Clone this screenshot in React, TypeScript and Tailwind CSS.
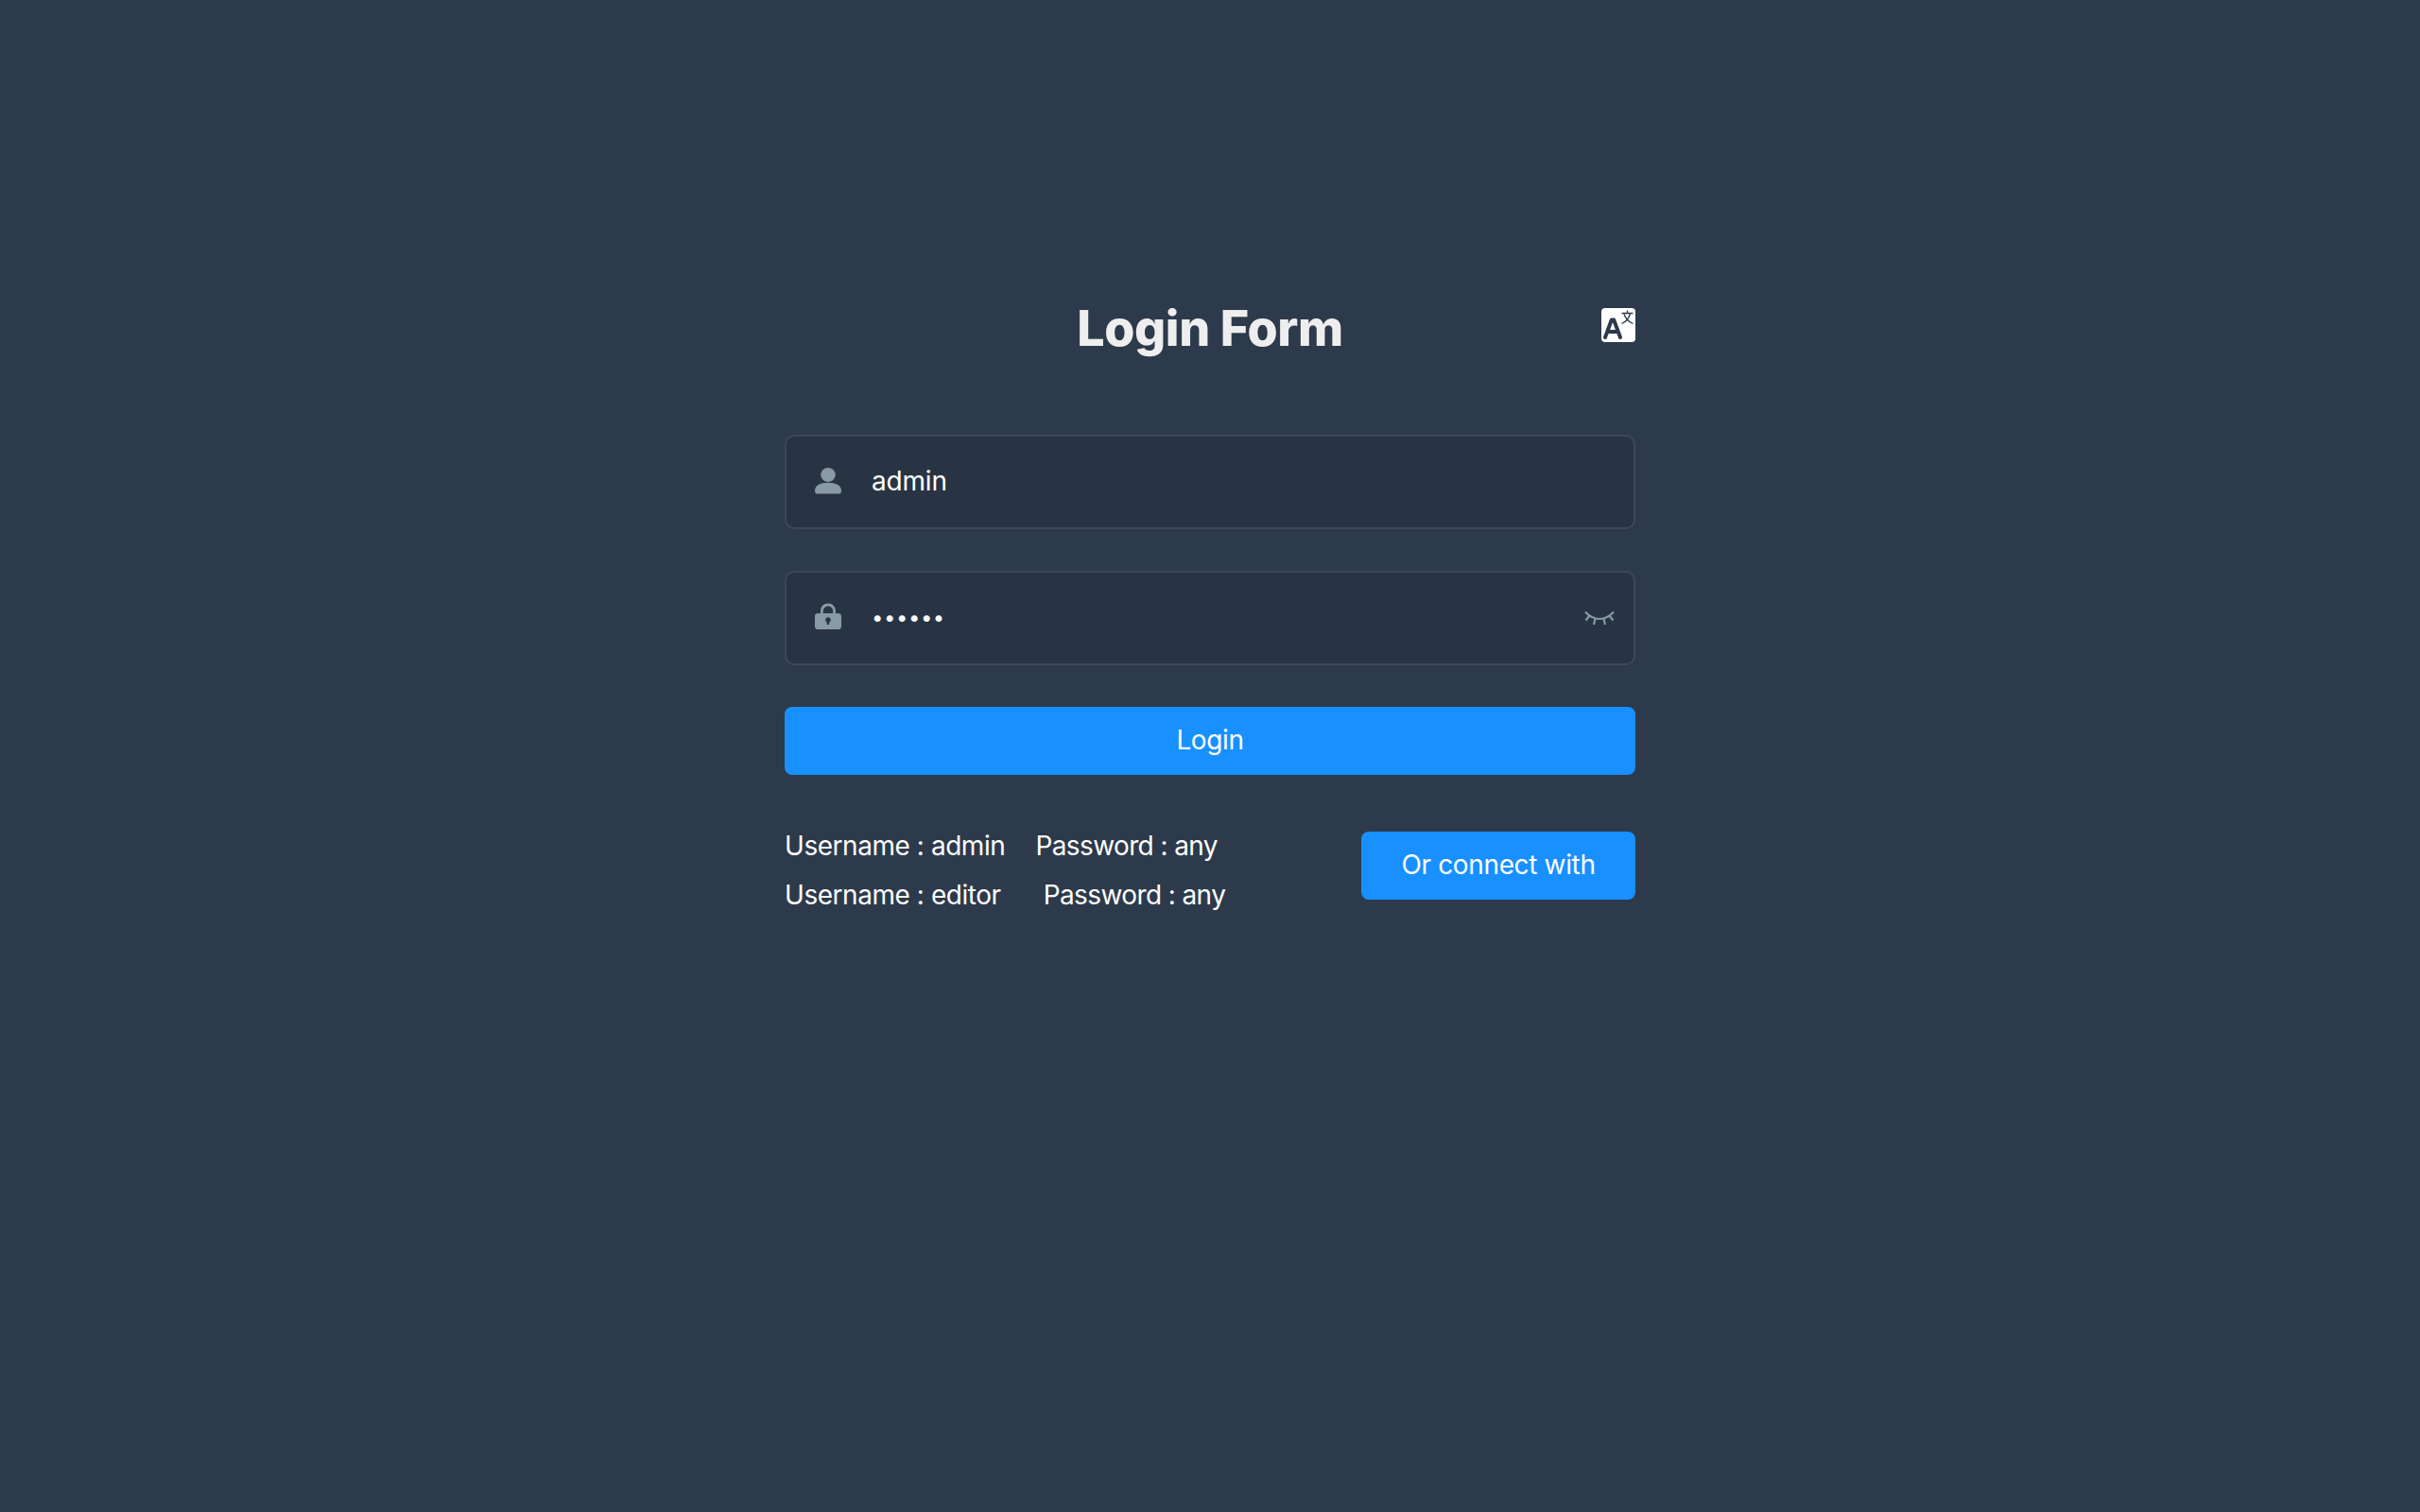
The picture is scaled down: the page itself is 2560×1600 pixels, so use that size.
import { useState } from "react";

function UserIcon() {
  return (
    <svg viewBox="0 0 28 28" className="w-7 h-7 fill-[#889aa4]">
      <ellipse cx="14" cy="7.5" rx="7.8" ry="7.5" />
      <path d="M0 24.5C0 18.5 6 15.8 14 15.8S28 18.5 28 24.5C28 26.5 27 27.5 25.5 27.5H2.5C1 27.5 0 26.5 0 24.5Z" />
    </svg>
  );
}

function LockIcon() {
  return (
    <svg viewBox="0 0 28 28" className="w-7 h-7 fill-[#889aa4]">
      <path d="M3 11H6V8.5C6 4 9.5 0.5 14 0.5S22 4 22 8.5V11H25C26.7 11 28 12.2 28 13.8V25C28 26.7 26.7 28 25 28H3C1.3 28 0 26.7 0 25V13.8C0 12.2 1.3 11 3 11ZM8.8 11H19.2V8.8C19.2 5.8 17 3.4 14 3.4S8.8 5.8 8.8 8.8Z" fillRule="evenodd" />
      <circle cx="14" cy="18" r="2.7" fill="#283443" />
      <rect x="12.8" y="18" width="2.4" height="5" fill="#283443" />
    </svg>
  );
}

function EyeClosedIcon() {
  return (
    <svg viewBox="0 0 32 16" className="w-8 h-4 fill-none stroke-[#889aa4] stroke-[2.2]">
      <path d="M1 0.5C6 6 10.5 8 16 8S26 6 31 0.5" />
      <path d="M5.5 4.5L1.5 9.5M11.5 7.5L10 14M20.5 7.5L22 14M26.5 4.5L30.5 9.5" />
    </svg>
  );
}

function LangIcon() {
  return (
    <svg viewBox="0 0 36 36" className="w-9 h-9">
      <rect width="36" height="36" rx="4" fill="#ffffff" />
      <path d="M4 31L10.8 12.5H13.2L20 31M6.8 25H17.2" fill="none" stroke="#2d3a4b" strokeWidth="4" strokeLinecap="round" strokeLinejoin="round" />
      <path d="M21.5 5.5H33.5M27.5 2.5V5.5M30.5 5.5C29.5 10 26 14.5 21.5 16.5M24 6.5C25.5 11 29 14.5 33.5 16.5" fill="none" stroke="#2d3a4b" strokeWidth="1.3" />
    </svg>
  );
}

export default function App() {
  const [username] = useState("admin");
  const [password] = useState("111111");

  return (
    <div className="min-h-screen w-full bg-[#2d3a4b] font-['Inter',sans-serif] overflow-hidden">
      <form className="w-[900px] mx-auto pt-[320px]">
        <div className="relative">
          <h3 className="text-[52px] leading-[56px] font-extrabold tracking-[-0.4px] text-[#eeeeee] text-center mb-[84px]">Login Form</h3>
          <span className="absolute right-0 top-[6px]">
            <LangIcon />
          </span>
        </div>

        <div className="flex items-center h-[100px] mb-11 rounded-[10px] border-2 border-white/10 bg-[#283443]">
          <span className="pl-[30px] pr-[32px] pb-[2px] flex">
            <UserIcon />
          </span>
          <input
            readOnly
            value={username}
            className="flex-1 h-full pb-[2px] bg-transparent text-[28px] tracking-[-0.2px] text-white outline-none"
          />
        </div>

        <div className="flex items-center h-[100px] mb-11 rounded-[10px] border-2 border-white/10 bg-[#283443]">
          <span className="pl-[30px] pr-[32px] pb-[4px] flex">
            <LockIcon />
          </span>
          <input
            readOnly
            type="password"
            value={password}
            className="flex-1 h-full pb-[2px] bg-transparent text-[22px] tracking-[0.6px] text-white outline-none"
          />
          <span className="pr-[20px] pt-[2px] flex">
            <EyeClosedIcon />
          </span>
        </div>

        <button type="button" className="block w-full h-[72px] pb-[2px] mb-[49px] rounded-lg bg-[#1890ff] text-[28px] tracking-[-0.4px] text-white">
          Login
        </button>

        <div className="flex items-start justify-between">
          <div className="text-[28px] leading-[52px] tracking-[-0.45px] text-white">
            <div className="flex">
              <span className="mr-[32px]">Username : admin</span>
              <span className="tracking-[-0.6px]">Password : any</span>
            </div>
            <div className="flex">
              <span className="mr-[45px]">Username : editor</span>
              <span className="tracking-[-0.6px]">Password : any</span>
            </div>
          </div>
          <button type="button" className="w-[290px] h-[72px] mt-[11px] pb-[2px] rounded-lg bg-[#1890ff] text-[28px] tracking-[-0.35px] text-white">
            Or connect with
          </button>
        </div>
      </form>
    </div>
  );
}
